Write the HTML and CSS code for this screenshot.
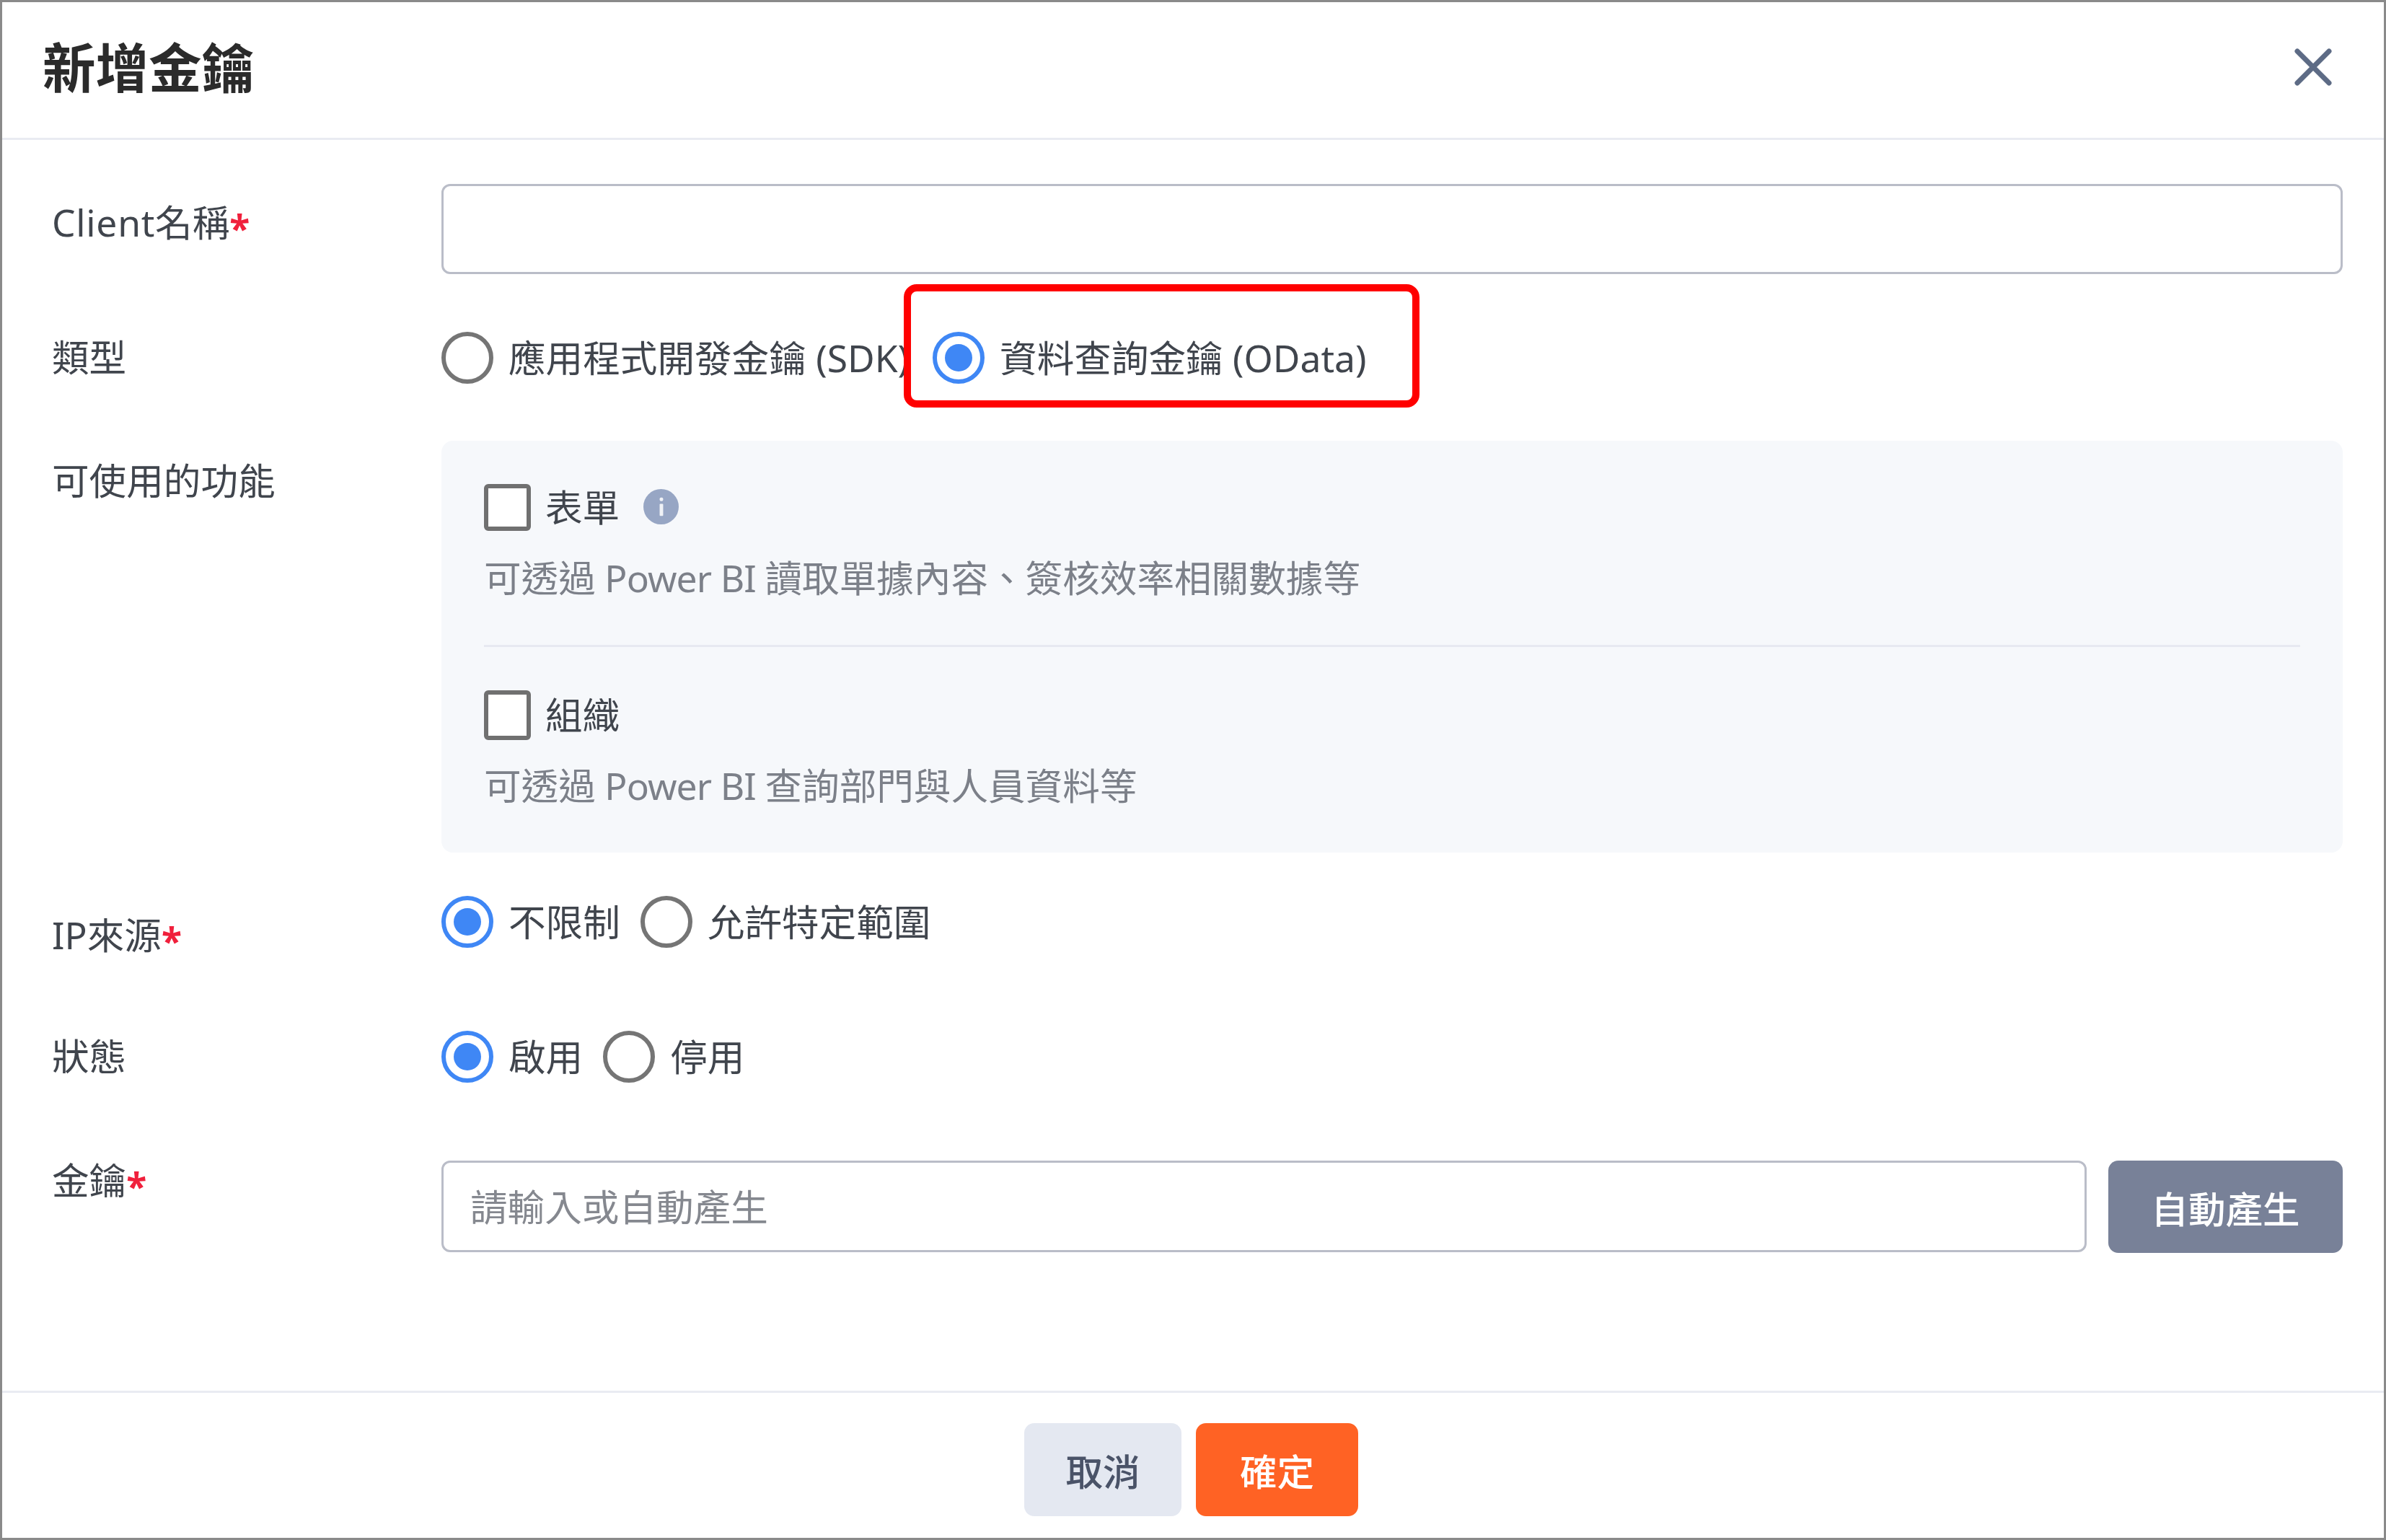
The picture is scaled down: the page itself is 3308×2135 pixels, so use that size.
FILE: index.html
```html
<!DOCTYPE html>
<html lang="zh-Hant">
<head>
<meta charset="utf-8">
<title>新增金鑰</title>
<link rel="stylesheet" href="styles.css">
</head>
<body>
<div class="dialog">
  <header class="head">
    <h1 class="title">新增金鑰</h1>
    <svg class="close" viewBox="0 0 52 52" aria-label="關閉"><path d="M4 4L48 48M48 4L4 48"/></svg>
  </header>
  <main class="form">
    <div class="row">
      <div class="label pad-client"><span class="latin">Client</span>名稱<span class="req">*</span></div>
      <input class="input grow" type="text">
    </div>
    <div class="row row-type">
      <div class="label">類型</div>
      <div class="radios radios-type">
        <label class="opt"><span class="radio"></span>應用程式開發金鑰 (SDK)</label>
        <label class="opt"><span class="radio on"></span>資料查詢金鑰 (OData)</label>
      </div>
    </div>
    <div class="row row-scope">
      <div class="label pad-scope">可使用的功能</div>
      <div class="panel grow">
        <div class="check-row">
          <span class="check"></span><span>表單</span>
          <svg class="info" viewBox="0 0 50 50"><circle cx="25" cy="25" r="25"/><rect x="23" y="12" width="5" height="5" rx="2"/><rect x="23" y="21" width="5" height="17" rx="1"/></svg>
        </div>
        <p class="desc">可透過<span class="tight"> Power BI </span>讀取單據內容、簽核效率相關數據等</p>
        <div class="divider"></div>
        <div class="check-row check-row-tall">
          <span class="check"></span><span>組織</span>
        </div>
        <p class="desc desc-last">可透過<span class="tight"> Power BI </span>查詢部門與人員資料等</p>
      </div>
    </div>
    <div class="row row-ip">
      <div class="label pad-ip">IP來源<span class="req">*</span></div>
      <div class="radios">
        <label class="opt"><span class="radio on"></span>不限制</label>
        <label class="opt"><span class="radio"></span>允許特定範圍</label>
      </div>
    </div>
    <div class="row row-status">
      <div class="label">狀態</div>
      <div class="radios">
        <label class="opt"><span class="radio on"></span>啟用</label>
        <label class="opt"><span class="radio"></span>停用</label>
      </div>
    </div>
    <div class="row row-key">
      <div class="label label-key">金鑰<span class="req">*</span></div>
      <input class="input input-key grow" type="text" placeholder="請輸入或自動產生">
      <button class="btn btn-gen" type="button">自動產生</button>
    </div>
  </main>
  <footer class="foot">
    <button class="btn btn-cancel" type="button">取消</button>
    <button class="btn btn-ok" type="button">確定</button>
  </footer>
  <div class="callout"></div>
</div>
</body>
</html>
```
FILE: styles.css
```css
* { box-sizing: border-box; }
html, body { margin: 0; padding: 0; background: #fff; }
body {
  font-family: "Noto Sans", "Noto Sans CJK TC", sans-serif;
  font-size: 51.6px;
  color: #40454d;
}
.dialog {
  position: relative;
  width: 3308px;
  height: 2135px;
  border: 3px solid #8a8a8a;
  display: flex;
  flex-direction: column;
  overflow: hidden;
}
.head {
  height: 191px;
  flex: none;
  border-bottom: 3px solid #e9ebf2;
  padding: 0 72px 6px 56px;
  display: flex;
  align-items: center;
  justify-content: space-between;
}
.title {
  margin: 0;
  font-size: 73.5px;
  font-weight: 700;
  color: #2b2b2b;
  line-height: 1;
}
.close {
  width: 52px;
  height: 52px;
  margin-top: -2px;
  fill: none;
  stroke: #5d6b85;
  stroke-width: 7;
  stroke-linecap: round;
}
.form {
  flex: 1;
  padding: 61px 57px 0 69px;
}
.row { display: flex; align-items: flex-start; }
.row-type { margin-top: 80px; }
.row-scope { margin-top: 79px; }
.row-ip { margin-top: 60px; }
.row-status { margin-top: 98px; }
.row-key { margin-top: 108px; }
.label {
  flex: none;
  width: 540px;
  line-height: 70px;
  white-space: nowrap;
}
.latin { letter-spacing: 0.7px; }
.tight { letter-spacing: -0.9px; }
.pad-client { padding-top: 18px; }
.pad-scope { padding-top: 20px; }
.pad-ip { padding-top: 19px; }
.label-key { line-height: 54px; }
.req {
  color: #f0203c;
  font-weight: 700;
  display: inline-block;
  line-height: 1;
  vertical-align: -0.16em;
}
.grow { flex: 1; min-width: 0; }
.input {
  height: 125px;
  border: 3px solid #babdc8;
  border-radius: 12px;
  background: #fff;
  outline: none;
  padding: 0 37px;
  font: inherit;
  color: inherit;
}
.input-key { height: 127px; }
.input::placeholder { color: #85888f; opacity: 1; }
.radios { display: flex; gap: 28px; }
.radios-type { gap: 33px; }
.opt {
  display: flex;
  align-items: center;
  gap: 21px;
  white-space: nowrap;
  line-height: 72px;
}
.radio {
  flex: none;
  width: 72px;
  height: 72px;
  border: 6px solid #757575;
  border-radius: 50%;
  display: flex;
  align-items: center;
  justify-content: center;
}
.radio.on { border-color: #3f87f5; }
.radio.on::after {
  content: "";
  width: 38px;
  height: 38px;
  border-radius: 50%;
  background: #3f87f5;
}
.panel {
  background: #f6f8fb;
  border-radius: 16px;
  padding: 60px 59px 56px;
  height: 571px;
}
.check-row {
  display: flex;
  align-items: center;
  height: 65px;
  gap: 20px;
  line-height: 65px;
}
.check-row-tall { height: 69px; line-height: 69px; }
.check {
  flex: none;
  width: 65px;
  height: 100%;
  border: 6px solid #707070;
  border-radius: 6px;
  background: #fff;
}
.info {
  width: 49px;
  height: 49px;
  margin-left: 13px;
  margin-top: -2px;
  fill: #97a6c4;
}
.info rect { fill: #fff; opacity: .85; }
.desc {
  margin: 30px 0 0;
  line-height: 70px;
  color: #7c8089;
  white-space: nowrap;
}
.desc-last { margin-top: 28px; }
.divider {
  height: 3px;
  margin: 58px 0 60px;
  background: #e7e9f1;
}
.btn {
  font: inherit;
  font-weight: 500;
  border: 0;
  padding: 0;
  border-radius: 14px;
  cursor: pointer;
}
.btn-gen {
  flex: none;
  width: 325px;
  height: 128px;
  margin-left: 30px;
  background: #788198;
  color: #fff;
}
.foot {
  flex: none;
  height: 204px;
  border-top: 3px solid #e9ebf2;
  padding: 42px 5px 0 0;
  display: flex;
  justify-content: center;
  align-items: flex-start;
  gap: 20px;
}
.btn-cancel {
  width: 218px;
  height: 129px;
  background: #e4e8f1;
  color: #4a5368;
}
.btn-ok {
  width: 225px;
  height: 129px;
  background: #ff6224;
  color: #fff;
}
.callout {
  position: absolute;
  left: 1250px;
  top: 391px;
  width: 715px;
  height: 171px;
  border: 10px solid #f00;
  border-radius: 18px;
}
```
